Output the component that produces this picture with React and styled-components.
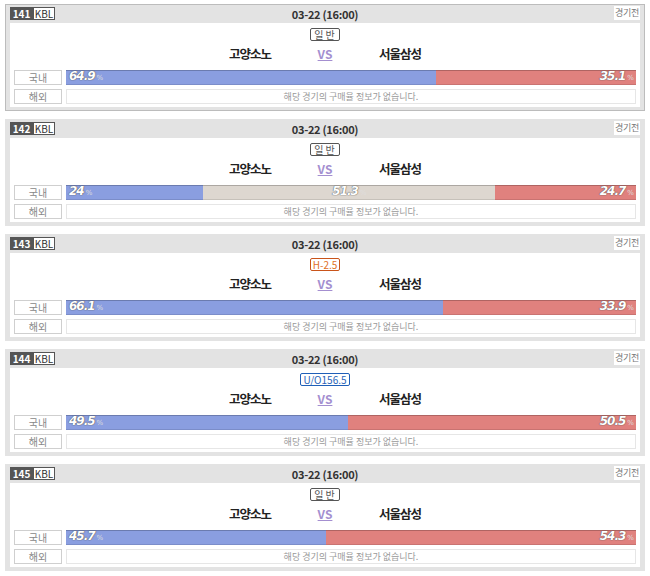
import React from 'react'
import styled, { createGlobalStyle, css } from 'styled-components'

const GlobalStyle = createGlobalStyle`
  body {
    margin: 0;
    background: #fff;
    font-family: "Noto Sans CJK KR", "Noto Sans", sans-serif;
  }
`

const List = styled.div`
  display: flex;
  flex-direction: column;
  gap: 8px;
  padding: 4px 5px;
  width: 640px;
`

const Card = styled.div`
  background: #e3e3e3;
  border: 1px solid ${p => (p.$active ? '#bcbcbc' : '#e3e3e3')};
  padding: 0 4px 3px;
`

const Header = styled.div`
  position: relative;
  height: 18px;
  display: flex;
  align-items: center;
  justify-content: center;
`

const Badges = styled.div`
  position: absolute;
  left: 0;
  top: 2px;
  display: flex;
  height: 13px;
`

const NumBadge = styled.span`
  background: #555;
  color: #fff;
  font-size: 10px;
  font-weight: 700;
  line-height: 13px;
  width: 23px;
  text-align: center;
`

const LeagueBadge = styled.span`
  background: #fff;
  border: 1px solid #555;
  color: #333;
  font-size: 10px;
  line-height: 11px;
  width: 20px;
  text-align: center;
`

const DateText = styled.span`
  font-size: 11px;
  font-weight: 700;
  color: #333;
  letter-spacing: -0.3px;
`

const State = styled.span`
  position: absolute;
  right: 0;
  top: 1px;
  background: #fff;
  color: #777;
  font-size: 9px;
  line-height: 14px;
  letter-spacing: -0.3px;
  padding: 0 1px;
`

const Body = styled.div`
  background: #fff;
  padding: 5px 4px 3px;
  display: flex;
  flex-direction: column;
  align-items: stretch;
`

const tagColors = {
  normal: css`border-color: #555; color: #555; letter-spacing: 2px; padding-left: 3px;`,
  handicap: css`border-color: #c9541a; color: #e0701f;`,
  overunder: css`border-color: #1f5fb8; color: #2a64b8;`,
}

const Tag = styled.span`
  align-self: center;
  border: 1px solid;
  border-radius: 2px;
  background: #fff;
  font-size: 10px;
  line-height: 11px;
  padding: 0 2px;
  ${p => tagColors[p.$kind]}
`

const Teams = styled.div`
  display: grid;
  grid-template-columns: 75px 75px 75px;
  justify-content: center;
  align-items: center;
  height: 20px;
  margin: 2px 0 7px;
`

const Team = styled.span`
  text-align: center;
  font-size: 12.5px;
  font-weight: 700;
  color: #222;
  letter-spacing: -1px;
`

const Vs = styled.span`
  text-align: center;
  font-size: 12px;
  font-weight: 700;
  color: #a48fd0;
  text-decoration: underline;
`

const Row = styled.div`
  display: flex;
  gap: 4px;
  height: 15px;
  & + & {
    margin-top: 4px;
  }
`

const Label = styled.span`
  width: 46px;
  flex: none;
  border: 1px solid #cfcfcf;
  color: #888;
  font-size: 10px;
  line-height: 13px;
  text-align: center;
`

const Bar = styled.div`
  flex: 1;
  display: flex;
  overflow: hidden;
`

const segColors = {
  home: '#8a9ee0',
  draw: '#ddd7d0',
  away: '#e0817e',
}

const Segment = styled.div`
  background: ${p => segColors[p.$side]};
  box-shadow: inset 0 1px 0 rgba(0, 0, 0, 0.22), inset 0 -1px 0 rgba(0, 0, 0, 0.1);
  display: flex;
  align-items: center;
  justify-content: ${p => (p.$side === 'home' ? 'flex-start' : p.$side === 'draw' ? 'center' : 'flex-end')};
  padding: 0 2px 0 3px;
  box-sizing: border-box;
  white-space: nowrap;
`

const Pct = styled.span`
  color: #fff;
  font-family: "DejaVu Sans", sans-serif;
  font-size: 12px;
  font-weight: 700;
  font-style: italic;
  letter-spacing: -1px;
  text-shadow: 0 0 1px #555, 0 0 1px #555;
  line-height: 15px;
`

const Unit = styled.span`
  color: #ddd;
  font-size: 7px;
  font-style: normal;
  font-weight: 400;
  letter-spacing: 0;
  margin-left: 2px;
  text-shadow: none;
`

const Empty = styled.div`
  flex: 1;
  border: 1px solid #e6e6e6;
  color: #999;
  font-size: 9px;
  line-height: 13px;
  text-align: center;
`

const games = [
  { no: 141, tag: ['normal', '일반'], bars: [['home', 64.9], ['away', 35.1]] },
  { no: 142, tag: ['normal', '일반'], bars: [['home', 24], ['draw', 51.3], ['away', 24.7]] },
  { no: 143, tag: ['handicap', 'H-2.5'], bars: [['home', 66.1], ['away', 33.9]] },
  { no: 144, tag: ['overunder', 'U/O156.5'], bars: [['home', 49.5], ['away', 50.5]] },
  { no: 145, tag: ['normal', '일반'], bars: [['home', 45.7], ['away', 54.3]] },
]

function Game({ game, active }) {
  return (
    <Card $active={active}>
      <Header>
        <Badges>
          <NumBadge>{game.no}</NumBadge>
          <LeagueBadge>KBL</LeagueBadge>
        </Badges>
        <DateText>03-22 (16:00)</DateText>
        <State>경기전</State>
      </Header>
      <Body>
        <Tag $kind={game.tag[0]}>{game.tag[1]}</Tag>
        <Teams>
          <Team>고양소노</Team>
          <Vs>VS</Vs>
          <Team>서울삼성</Team>
        </Teams>
        <Row>
          <Label>국내</Label>
          <Bar>
            {game.bars.map(([side, v]) => (
              <Segment key={side} $side={side} style={{ width: `${v}%` }}>
                <Pct>
                  {v}
                  <Unit>%</Unit>
                </Pct>
              </Segment>
            ))}
          </Bar>
        </Row>
        <Row>
          <Label>해외</Label>
          <Empty>해당 경기의 구매율 정보가 없습니다.</Empty>
        </Row>
      </Body>
    </Card>
  )
}

export default function App() {
  return (
    <>
      <GlobalStyle />
      <List>
        {games.map((g, i) => (
          <Game key={g.no} game={g} active={i === 0} />
        ))}
      </List>
    </>
  )
}
